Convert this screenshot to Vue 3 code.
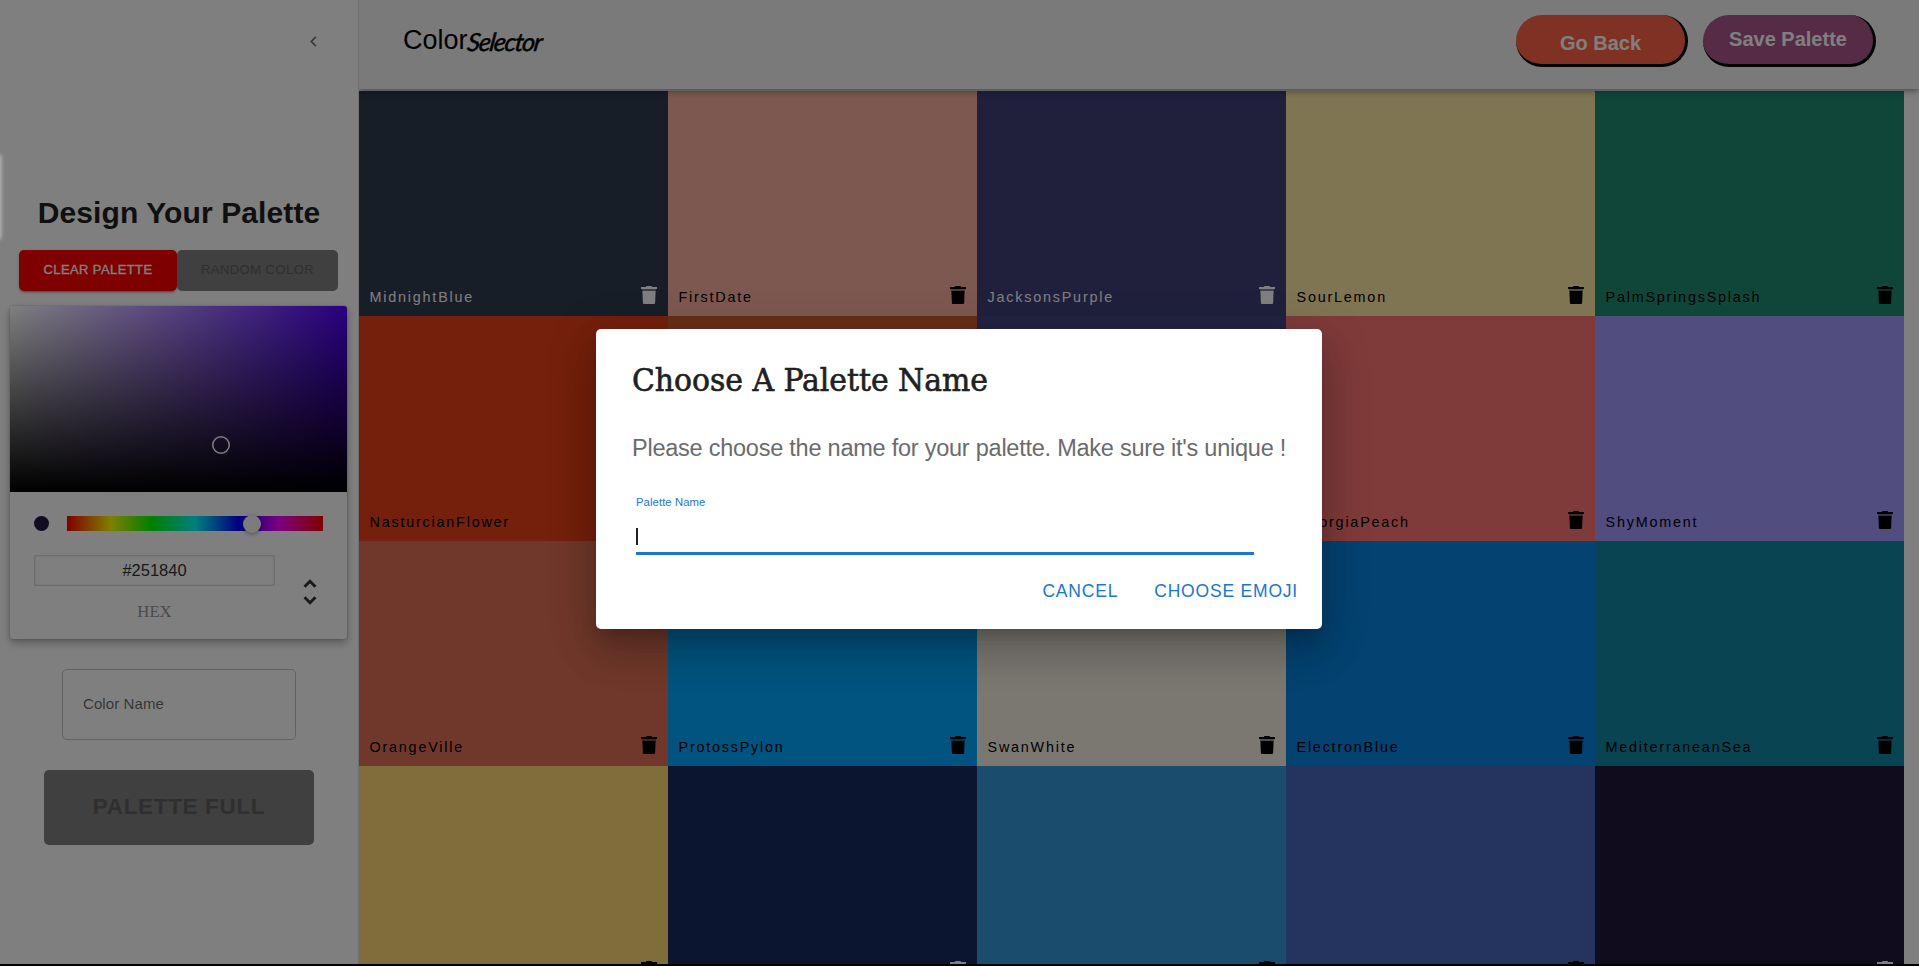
<script setup>
const swatches = [
  { name: 'MidnightBlue', color: '#2f3c4e', light: true },
  { name: 'FirstDate', color: '#fab1a0' },
  { name: 'JacksonsPurple', color: '#40407a', light: true },
  { name: 'SourLemon', color: '#ffeaa7' },
  { name: 'PalmSpringsSplash', color: '#218c74' },
  { name: 'NasturcianFlower', color: '#e84118' },
  { name: 'ChileanFire', color: '#cd6133' },
  { name: 'LuckyPoint', color: '#474787', light: true },
  { name: 'GeorgiaPeach', color: '#ff7675' },
  { name: 'ShyMoment', color: '#a29bfe' },
  { name: 'OrangeVille', color: '#e17055' },
  { name: 'ProtossPylon', color: '#00a8ff' },
  { name: 'SwanWhite', color: '#f7f1e3' },
  { name: 'ElectronBlue', color: '#0984e3' },
  { name: 'MediterraneanSea', color: '#1289a7' },
  { name: '', color: '#ffda79' },
  { name: '', color: '#182b60', light: true },
  { name: '', color: '#3498db' },
  { name: '', color: '#4a69bd' },
  { name: '', color: '#21173b', light: true }
]
</script>

<template>
  <div class="app">
    <div class="page">
      <aside class="sidebar">
        <div class="sidebar-top">
          <svg class="chevron" viewBox="0 0 24 24"><path d="M15.41 7.41 14 6l-6 6 6 6 1.41-1.41L10.83 12z" /></svg>
        </div>
        <h1 class="heading">Design Your Palette</h1>
        <div class="actions">
          <button class="btn clear">CLEAR PALETTE</button>
          <button class="btn random" disabled>RANDOM COLOR</button>
        </div>
        <div class="picker">
          <div class="saturation"><span class="sat-ring"></span></div>
          <div class="hue-row">
            <span class="dot"></span>
            <div class="hue"><span class="hue-knob"></span></div>
          </div>
          <div class="fields">
            <div class="hex">
              <div class="hex-input">#251840</div>
              <div class="hex-label">HEX</div>
            </div>
            <svg class="toggle" viewBox="0 0 24 24"><path d="M12,18.17L8.83,15L7.42,16.41L12,21L16.59,16.41L15.17,15M12,5.83L15.17,9L16.58,7.59L12,3L7.41,7.59L8.83,9L12,5.83Z" /></svg>
          </div>
        </div>
        <div class="name-field">Color Name</div>
        <button class="btn full" disabled>PALETTE FULL</button>
      </aside>
      <section class="main">
        <header class="header">
          <div class="logo"><span class="logo-a">Color</span><span class="logo-b">Selector</span></div>
          <nav class="nav">
            <button class="pill back">Go Back</button>
            <button class="pill save">Save Palette</button>
          </nav>
        </header>
        <div class="grid">
          <div v-for="(s, i) in swatches" :key="i" class="swatch" :class="{ light: s.light }" :style="{ background: s.color }">
            <span class="swatch-name">{{ s.name }}</span>
            <svg class="trash" viewBox="0 0 16 18">
              <path d="M5.2 0h5.6v1H16v2H0V1h5.2z" />
              <path opacity=".35" d="M1 3h14v2H1z" />
              <path d="M1.4 5h13.2l-.5 12q-.1 1-1.100 1H3q-1 0-1.100-1z" />
            </svg>
          </div>
        </div>
      </section>
    </div>
    <div class="edge-glow"></div>
    <div class="backdrop">
      <div class="dialog">
        <h2 class="dialog-title"><span>Choose A Palette Name</span></h2>
        <p class="dialog-text">Please choose the name for your palette. Make sure it's unique !</p>
        <div class="text-field">
          <label>Palette Name</label>
          <div class="input"><span class="caret"></span></div>
        </div>
        <div class="dialog-actions">
          <button class="link">CANCEL</button>
          <button class="link">CHOOSE EMOJI</button>
        </div>
      </div>
    </div>
  </div>
</template>

<style>
body { overflow: hidden; background: #000; }
</style>

<style scoped>
* { box-sizing: border-box; }
.app { position: relative; width: 1919px; height: 966px; overflow: hidden; background: #000; font-family: "Liberation Sans", Arial, sans-serif; }
button { border: 0; font-family: inherit; padding: 0; margin: 0; white-space: nowrap; }
.page { display: flex; height: 964px; overflow: hidden; background: #fff; }

.sidebar { position: relative; z-index: 2; background: #fff; flex: none; width: 359px; border-right: 1px solid #e0e0e0; display: flex; flex-direction: column; align-items: center; }
.sidebar-top { width: 100%; height: 82px; display: flex; align-items: center; justify-content: flex-end; padding-right: 34px; }
.chevron { width: 21px; height: 21px; fill: rgba(0, 0, 0, .54); }
.heading { margin: 113px 0 19px; font-size: 30px; line-height: 35px; height: 36px; font-weight: 700; letter-spacing: .1px; color: #212121; white-space: nowrap; }
.actions { display: flex; width: 319px; height: 41px; margin: 0 1px 15px 0; }
.btn { border-radius: 5px; letter-spacing: .46px; }
.clear { width: 158px; font-size: 13px; padding-bottom: 3px; letter-spacing: .4px; background: #f00; color: #fff; -webkit-text-stroke: .3px #fff; box-shadow: 0 3px 1px -2px rgba(0, 0, 0, .2), 0 2px 2px rgba(0, 0, 0, .14), 0 1px 5px rgba(0, 0, 0, .12); }
.random { width: 161px; font-size: 13px; padding-bottom: 3px; background: #808080; color: #5f5f5f; }

.picker { width: 337px; height: 333px; margin: 0 1px 30px 0; border-radius: 3px; background: #fff; box-shadow: 0 0 2px rgba(0, 0, 0, .3), 0 4px 8px rgba(0, 0, 0, .3); }
.saturation { position: relative; height: 186px; border-radius: 3px 3px 0 0; background: linear-gradient(to top, #000, rgba(0, 0, 0, 0)), linear-gradient(to right, #fff, rgba(255, 255, 255, 0)), #5200ff; }
.sat-ring { position: absolute; left: 202px; top: 130px; width: 18px; height: 18px; border-radius: 50%; box-shadow: inset 0 0 0 1.5px #fff; }
.hue-row { display: flex; justify-content: space-between; padding: 24px 24px 0; }
.dot { width: 15px; height: 15px; border-radius: 50%; background: #251840; }
.hue { position: relative; width: 256px; height: 15px; background: linear-gradient(to right, #f00 0%, #ff0 17%, #0f0 33%, #0ff 50%, #00f 67%, #f0f 83%, #f00 100%); }
.hue-knob { position: absolute; left: 176px; top: -1px; width: 18px; height: 18px; border-radius: 50%; background: #f8f8f8; box-shadow: 0 1px 4px rgba(0, 0, 0, .37); }
.fields { display: flex; padding: 24px 20px 0 24px; }
.hex { width: 241px; text-align: center; }
.hex-input { height: 31px; border-radius: 2px; box-shadow: inset 0 0 0 1px #dadada, inset 0 0 2px 1px #ccc; font-size: 16.5px; line-height: 31px; color: #333; }
.hex-label { margin-top: 16px; font-family: "Liberation Serif", "Times New Roman", serif; font-size: 16.7px; line-height: 20px; color: #969696; }
.toggle { width: 34px; height: 34px; margin: 20px 0 0 18px; fill: #333; }

.name-field { width: 234px; height: 71px; margin-bottom: 30px; border: 1px solid rgba(0, 0, 0, .23); border-radius: 5px; padding-left: 20px; font-size: 15px; letter-spacing: .1px; line-height: 68px; color: rgba(0, 0, 0, .6); }
.full { width: 270px; height: 75px; padding-bottom: 2px; background: #808080; color: #5f5f5f; font-size: 22.5px; font-weight: 700; letter-spacing: .65px; }

.main { flex: 1; min-width: 0; }
.header { position: relative; z-index: 1; height: 89px; display: flex; justify-content: space-between; padding: 0 43px 0 44px; background: #f5f5f5; box-shadow: 0 2px 4px -1px rgba(0, 0, 0, .2), 0 4px 5px rgba(0, 0, 0, .14), 0 1px 10px rgba(0, 0, 0, .12); }
.logo { display: flex; height: 80px; line-height: 80px; color: #000; }
.logo-a { font-size: 27px; }
.logo-b { font-family: Lato, "Liberation Sans", sans-serif; font-style: italic; font-weight: 400; font-size: 25px; letter-spacing: -1.2px; line-height: 82px; -webkit-text-stroke: .5px #000; transform: skewX(-8deg); }
.nav { display: flex; gap: 15px; padding-top: 15px; }
.pill { height: 52px; border-right: 3px solid #000; border-bottom: 3px solid #000; border-radius: 26px; font-size: 20px; font-weight: 700; color: #fff; }
.back { width: 172px; background: #ff6347; padding-top: 8px; }
.save { width: 173px; background: #ac568c; padding-bottom: 1px; }
.grid { display: grid; grid-template-columns: repeat(5, 309px); grid-auto-rows: 225px; margin-top: 2px; }
.swatch { display: flex; align-items: flex-end; justify-content: space-between; padding: 0 11px 12px 10.5px; color: #000; }
.light { color: #fff; }
.swatch-name { font-size: 14.4px; line-height: 14px; letter-spacing: 1.78px; }
.trash { width: 16px; height: 18px; fill: currentColor; }

.edge-glow { position: absolute; z-index: 3; left: -4px; top: 156px; width: 4px; height: 82px; box-shadow: 0 0 4px 1px rgba(255, 255, 255, .5); }
.backdrop { position: absolute; inset: 0; z-index: 2; background: rgba(0, 0, 0, .5); padding: 329px 0 0 596px; }
.dialog { width: 726px; height: 300px; padding: 32px 24px 0 36px; border-radius: 5px; background: #fff; box-shadow: 0 11px 15px -7px rgba(0, 0, 0, .2), 0 24px 38px 3px rgba(0, 0, 0, .14), 0 9px 46px 8px rgba(0, 0, 0, .12); }
.dialog-title { margin: 0; height: 40px; line-height: 39px; font-family: "DejaVu Serif Condensed", "DejaVu Serif", serif; font-stretch: condensed; font-size: 31.5px; font-weight: 400; color: #212121; white-space: nowrap; }
.dialog-title span { display: inline-block; transform: scaleX(1.053); transform-origin: left; -webkit-text-stroke: .6px #212121; }
.dialog-text { margin: 32px 0 0; font-size: 23.5px; letter-spacing: -.24px; line-height: 30px; color: #6b6b6b; white-space: nowrap; }
.text-field { width: 618px; margin: 32px 0 0 4px; }
.text-field label { display: block; font-size: 11.3px; line-height: 14px; letter-spacing: .08px; color: #1976d2; }
.input { height: 46px; border-bottom: 3px solid #1976d2; padding-top: 19px; }
.caret { display: block; width: 2px; height: 17px; background: #212121; }
.dialog-actions { display: flex; justify-content: flex-end; gap: 36px; margin-top: 24px; }
.link { background: none; color: #1976d2; font-size: 17.5px; line-height: 24px; letter-spacing: .8px; }
</style>
